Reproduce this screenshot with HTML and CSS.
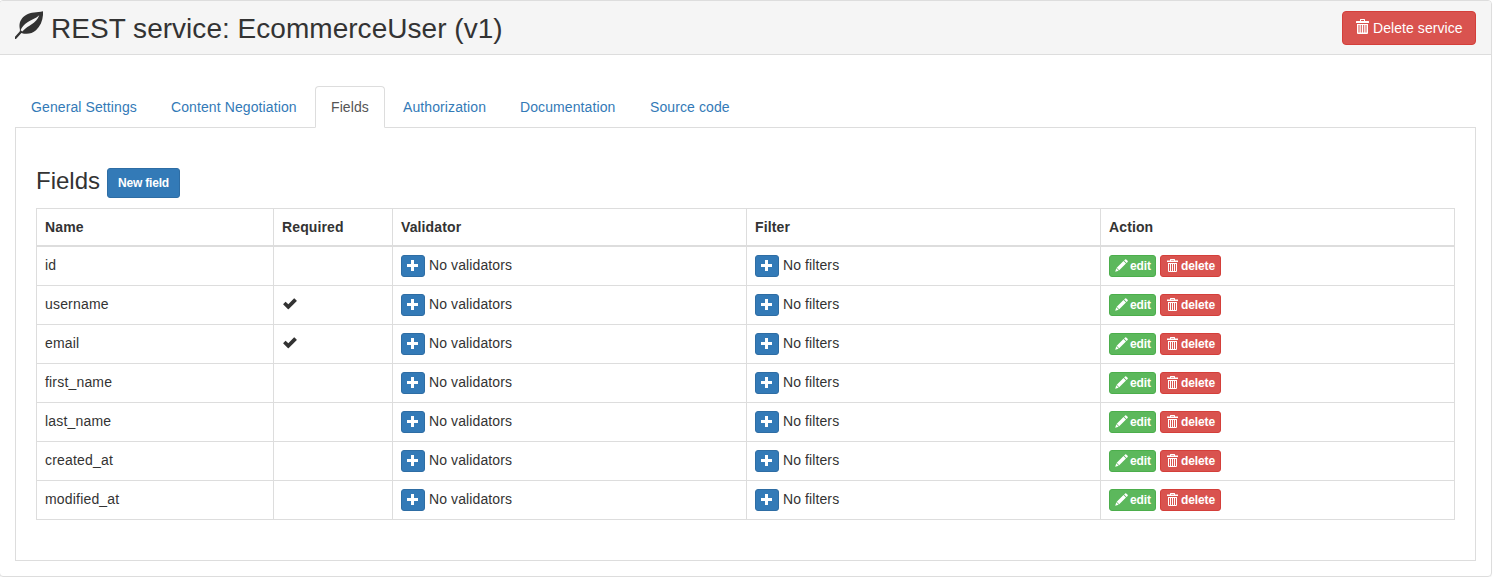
FILE: index.html
```
<!DOCTYPE html>
<html lang="en">
<head>
<meta charset="utf-8">
<title>REST service: EcommerceUser (v1)</title>
<link rel="stylesheet" href="styles.css">
</head>
<body>
<svg class="sprite" aria-hidden="true">
  <symbol id="i-leaf" viewBox="0 0 28 28"><path fill-rule="evenodd" d="M28 .3C22 1.700 16 1 11 4 6 7 3.500 12 4.800 17.800 5 18.800 5 19.700 4.700 20.600L0 25.700V28.200L1 28 6.400 21.900C11 23.600 17 23 21 19.300 26 14.500 28.500 8 28 .3ZM24.300 4.200C22.300 9.300 18.500 12.200 14.500 14.700 11.500 16.600 9.300 18 7.300 20.600L5.600 19.300C6.800 15.900 9 13.500 12.500 11.200 16.500 8.600 20.500 7.800 24.300 4.200Z"/></symbol>
  <symbol id="i-trash" viewBox="0 0 13 15"><path fill-rule="evenodd" d="M4 2V.5Q4 0 4.500 0H8.500Q9 0 9 .5V2H12.500Q13 2 13 2.500V4H0V2.500Q0 2 .5 2ZM5 1V2H8V1ZM1 5H12V14Q12 15 11 15H2Q1 15 1 14ZM2.500 6V13.500H3.500V6ZM4.800 6V13.500H5.800V6ZM7.200 6V13.500H8.200V6ZM9.500 6V13.500H10.500V6Z"/></symbol>
  <symbol id="i-trash-sm" viewBox="0 0 11 13"><path fill-rule="evenodd" d="M3 1.500V.5Q3 0 3.500 0H7.500Q8 0 8 .5V1.500H11V3H0V1.500ZM4 1V1.500H7V1ZM1 4H10V12Q10 13 9 13H2Q1 13 1 12ZM2 5V12H3V5ZM4 5V12H5V5ZM6 5V12H7V5ZM8 5V12H9V5Z"/></symbol>
  <symbol id="i-pencil" viewBox="0 0 13 13"><path d="M10.100.4Q10.700-.1 11.200.4L12.600 1.800Q13.100 2.300 12.600 2.900L11.600 3.900 9.100 1.400ZM8.500 2 11 4.500 4.200 11.300 1.700 8.800ZM1.300 9.300 3.700 11.700.2 12.800Z"/></symbol>
  <symbol id="i-plus" viewBox="0 0 12 12"><path d="M4 0H7V4H11V7H7V11H4V7H0V4H4Z"/></symbol>
  <symbol id="i-ok" viewBox="0 0 14 12"><path d="M.3 6 2.300 3.900Q2.600 3.700 2.900 3.900L5.300 6.200 10.900.5Q11.200.2 11.500.5L13.600 2.600Q13.900 2.900 13.600 3.200L5.800 11Q5.300 11.400 4.800 11L.3 6.600Q.1 6.300.3 6Z"/></symbol>
</svg>
<main class="panel">
  <header class="panel-heading">
    <h2 class="title"><svg class="leaf"><use href="#i-leaf"/></svg><span>REST service: EcommerceUser (v1)</span></h2>
    <button class="btn btn-danger btn-service"><svg class="trash"><use href="#i-trash"/></svg><span>Delete service</span></button>
  </header>
  <div class="panel-body">
    <nav class="tabs">
      <a class="tab tab-general">General Settings</a>
      <a class="tab tab-content">Content Negotiation</a>
      <a class="tab tab-fields active">Fields</a>
      <a class="tab tab-auth">Authorization</a>
      <a class="tab tab-docs">Documentation</a>
      <a class="tab tab-source">Source code</a>
    </nav>
    <section class="tab-pane">
      <div class="section-head"><h3>Fields</h3><button class="btn btn-primary btn-sm">New field</button></div>
      <table class="fields">
        <colgroup><col class="c-name"><col class="c-required"><col class="c-wide"><col class="c-wide"><col class="c-wide"></colgroup>
        <thead><tr><th>Name</th><th>Required</th><th>Validator</th><th>Filter</th><th>Action</th></tr></thead>
        <tbody id="rows"></tbody>
      </table>
    </section>
  </div>
</main>
<script src="script.js"></script>
</body>
</html>
```
FILE: styles.css
```
* { box-sizing: border-box; }
body { margin: 0; background: #fff; color: #333; font: 14px/20px "Liberation Sans", Arial, sans-serif; letter-spacing: .1px; overflow: hidden; }
svg { display: block; fill: currentColor; flex: none; }
.sprite { display: none; }
h2, h3 { margin: 0; font-weight: 400; }
.panel { width: 1493px; height: 577px; margin-left: -1px; border: 1px solid #ddd; border-radius: 4px; box-shadow: 0 1px 1px rgba(0, 0, 0, .05); }
.panel-heading { display: flex; justify-content: space-between; height: 54px; padding: 10px 15px; background: #f5f5f5; border-bottom: 1px solid #ddd; border-radius: 3px 3px 0 0; }
.title { display: flex; gap: 8px; font-size: 28px; line-height: 35px; letter-spacing: .03px; white-space: nowrap; }
.leaf { width: 28px; height: 28px; }
.btn { display: flex; align-items: center; border: 1px solid; color: #fff; font-family: inherit; white-space: nowrap; }
.btn-danger { background: #d9534f; border-color: #d43f3a; }
.btn-primary { background: #337ab7; border-color: #2e6da4; }
.btn-success { background: #5cb85c; border-color: #4cae4c; }
.btn-service { width: 134px; height: 34px; padding: 0 0 0 13px; gap: 4px; border-radius: 4px; font-size: 14px; letter-spacing: .07px; }
.trash { width: 13px; height: 15px; margin-top: -3px; }
.btn-sm { width: 73px; height: 30px; padding: 0; justify-content: center; border-radius: 3px; font-size: 12px; font-weight: 700; letter-spacing: -.2px; }
.panel-body { padding: 31px 15px 0; }
.tabs { display: flex; gap: 2px; height: 42px; margin-bottom: -1px; position: relative; }
.tab { height: 42px; padding: 10px 15px; border: 1px solid transparent; border-radius: 4px 4px 0 0; color: #337ab7; white-space: nowrap; }
.tab.active { background: #fff; color: #555; border-color: #ddd #ddd #fff; }
.tab-general { width: 138px; }
.tab-content { width: 158px; }
.tab-fields { width: 70px; }
.tab-auth { width: 115px; }
.tab-docs { width: 128px; }
.tab-pane { height: 434px; width: 1461px; padding: 40px 20px 0; border: 1px solid #ddd; }
.section-head { display: flex; gap: 7px; height: 40px; }
.section-head h3 { font-size: 24px; line-height: 26px; width: 64px; letter-spacing: 0; }
.fields { width: 1419px; border-collapse: collapse; table-layout: fixed; }
.c-name { width: 237px; }
.c-required { width: 119px; }
.c-wide { width: 354px; }
.fields th, .fields td { border: 1px solid #ddd; padding: 0 8px; text-align: left; }
.fields th { height: 37px; padding-top: 1px; border-bottom-width: 2px; letter-spacing: .12px; }
.fields td { height: 39px; }
.fields tbody tr:first-child td { height: 40px; padding-top: 1px; }
.line { display: flex; align-items: center; gap: 4px; height: 22px; }
.line > span { margin-top: -3px; }
.name { display: block; margin-top: -3px; letter-spacing: .18px; }
.btn-xs { height: 22px; padding: 0 4px 0 5px; gap: 3px; border-radius: 3px; font-size: 12px; font-weight: 700; letter-spacing: -.1px; }
.plus { width: 24px; padding: 0 0 0 5px; }
.plus svg { width: 12px; height: 12px; }
.edit { width: 47px; gap: 2px; }
.edit svg { width: 13px; height: 13px; margin-top: -1px; }
.delete { width: 61px; padding-left: 6px; }
.delete svg { width: 11px; height: 13px; margin-top: -2px; }
.ok { width: 14px; height: 12px; margin: -2px 0 0 .6px; }
```
FILE: script.js
```
const fields = [["id", false], ["username", true], ["email", true], ["first_name", false], ["last_name", false], ["created_at", false], ["modified_at", false]];
const icon = (id, cls = "") => `<svg class="${cls}"><use href="#i-${id}"/></svg>`;
const add = label => `<td><div class="line"><button class="btn btn-primary btn-xs plus">${icon("plus")}</button><span>${label}</span></div></td>`;
document.getElementById("rows").innerHTML = fields.map(([name, required]) => `<tr>
  <td><span class="name">${name}</span></td>
  <td>${required ? icon("ok", "ok") : ""}</td>
  ${add("No validators")}${add("No filters")}
  <td><div class="line"><button class="btn btn-success btn-xs edit">${icon("pencil")}edit</button><button class="btn btn-danger btn-xs delete">${icon("trash-sm")}delete</button></div></td>
</tr>`).join("");
```
